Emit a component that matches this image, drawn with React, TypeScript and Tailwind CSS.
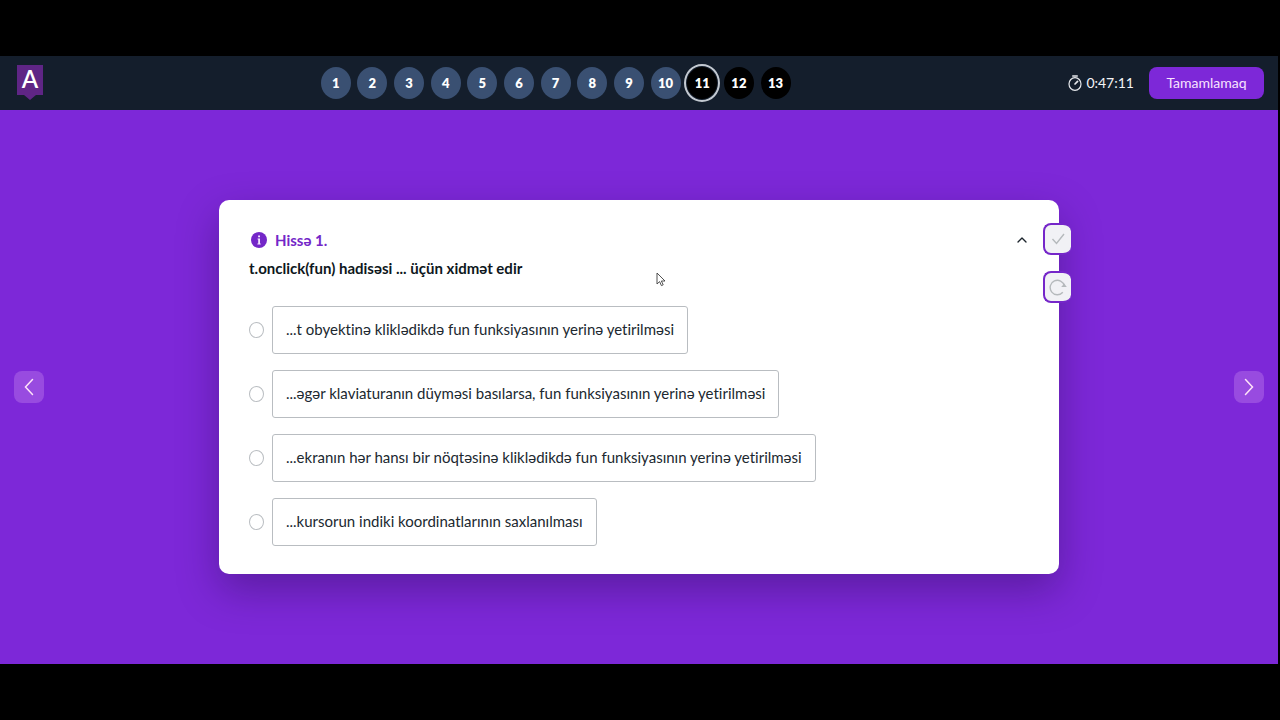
import { useState } from "react";
import { ChevronUp } from "lucide-react";
import clsx from "clsx";

const questions = Array.from({ length: 13 }, (_, i) => i + 1);
const answeredCount = 10;

const options = [
  "...t obyektinə kliklədikdə fun funksiyasının yerinə yetirilməsi",
  "...əgər klaviaturanın düyməsi basılarsa, fun funksiyasının yerinə yetirilməsi",
  "...ekranın hər hansı bir nöqtəsinə kliklədikdə fun funksiyasının yerinə yetirilməsi",
  "...kursorun indiki koordinatlarının saxlanılması",
];

function Logo() {
  return (
    <a href="#" aria-label="Ana səhifə" className="relative mb-0.5 flex h-[35px] w-[26px] justify-center">
      <svg viewBox="0 0 26 35" className="absolute inset-0 h-full w-full" aria-hidden="true">
        <path d="M0 0h26v30h-7l-6 5-6-5H0z" fill="#5f2585" />
      </svg>
      <span className="relative text-2xl leading-7 font-semibold text-white">A</span>
    </a>
  );
}

function StopwatchIcon() {
  return (
    <svg viewBox="0 0 14 16" className="h-4 w-3.5" fill="none" stroke="#e5e7eb" strokeWidth="1.2" strokeLinecap="round" aria-hidden="true">
      <path d="M4.8 1h4.4" strokeWidth="1.6" />
      <ellipse cx="7" cy="9" rx="6" ry="6.4" />
      <path d="M7 9l2.6-2.7" strokeWidth="1.7" />
    </svg>
  );
}

function Header({ current, onSelect }: { current: number; onSelect: (n: number) => void }) {
  return (
    <header className="flex h-[54px] items-center justify-between bg-[#141e2c] pr-3.5 pl-[17px]">
      <Logo />
      <nav aria-label="Suallar" className="flex w-[470px] items-center justify-between">
        {questions.map((n) => (
          <button
            key={n}
            type="button"
            onClick={() => onSelect(n)}
            className={clsx(
              "h-8 w-[30px] rounded-[50%] pt-0.5 text-[13px] font-extrabold text-white",
              n <= answeredCount ? "bg-[#3a5072]" : "bg-black",
              n === current && "outline-2 outline-offset-1 outline-[#c3c9d1]"
            )}
          >
            {n}
          </button>
        ))}
      </nav>
      <div className="flex items-center gap-[15px]">
        <div className="flex items-center gap-1 text-sm text-gray-100">
          <StopwatchIcon />
          <span>0:47:11</span>
        </div>
        <button type="button" className="h-8 w-[115px] rounded-lg bg-[#7d28d8] text-sm text-[#f8e4ff]">
          Tamamlamaq
        </button>
      </div>
    </header>
  );
}

function SideActions() {
  const style = "flex h-8 w-7 items-center justify-center rounded-lg border-t-2 border-l-2 border-b-2 border-[#7526c9] bg-[#f1f1f5]";
  return (
    <div className="absolute top-[23px] -right-3 flex flex-col gap-4">
      <button type="button" aria-label="Yoxla" className={style}>
        <svg viewBox="0 0 14 14" className="size-3.5" fill="none" stroke="#b5b9bc" strokeWidth="1.4" aria-hidden="true">
          <path d="M1.5 7l4 4.5L13 2" />
        </svg>
      </button>
      <button type="button" aria-label="Sıfırla" className={style}>
        <svg viewBox="0 0 18 18" className="size-[18px]" fill="none" stroke="#b5b9bc" strokeWidth="1.4" aria-hidden="true">
          <path d="M13.8 14.2A7.2 7.2 0 1 1 15.4 8" />
          <path d="M12.2 9h5.6L15.2 5.4z" fill="#b5b9bc" stroke="none" />
        </svg>
      </button>
    </div>
  );
}

function QuestionCard() {
  const [selected, setSelected] = useState<number | null>(null);

  return (
    <section className="relative w-full max-w-[840px] rounded-[10px] bg-white px-[30px] py-7 shadow-[0_16px_40px_rgba(30,10,60,0.35)]">
      <div className="flex h-6 items-center justify-between">
        <h2 className="flex items-center gap-2 pl-0.5 text-[15px] font-bold text-[#7427c8]">
          <svg viewBox="0 0 16 16" className="size-4" aria-hidden="true">
            <circle cx="8" cy="8" r="8" fill="#7427c8" />
            <path d="M7.1 3.4h1.9v1.8H7.1zM6.6 6.6H9v4.8h.7v1H6.4v-1h.8V7.6h-.6z" fill="#f3e6ff" />
          </svg>
          Hissə 1.
        </h2>
        <button type="button" aria-label="Bağla" className="flex w-3.5 justify-center text-[#1c242c]">
          <ChevronUp className="size-4 shrink-0" strokeWidth={2} />
        </button>
      </div>
      <p className="mt-1 text-[15px] leading-6 font-bold text-[#0e1720]">
        t.onclick(fun) hadisəsi ... üçün xidmət edir
      </p>
      <div role="radiogroup" className="mt-[26px] flex flex-col items-start gap-4">
        {options.map((text, i) => (
          <label key={text} className="flex items-center gap-2">
            <input
              type="radio"
              name="answer"
              checked={selected === i}
              onChange={() => setSelected(i)}
              className="h-4 w-[15px] shrink-0 appearance-none rounded-[50%] border border-[#b9bdc1] checked:border-[#7427c8] checked:bg-[#7427c8]"
            />
            <span className="flex min-h-12 items-center rounded-[3px] border border-[#b9bdc1] px-[13px] pb-0.5 text-[15px] text-[#20282f]">
              {text}
            </span>
          </label>
        ))}
      </div>
      <SideActions />
    </section>
  );
}

function Arrow({ path, label, onClick }: { path: string; label: string; onClick: () => void }) {
  return (
    <button
      type="button"
      aria-label={label}
      onClick={onClick}
      className="flex h-8 w-[30px] shrink-0 items-center justify-center rounded-lg bg-[#984be0] text-[#ffe3f8]"
    >
      <svg viewBox="0 0 10 18" className="h-[18px] w-2.5" fill="none" stroke="currentColor" strokeWidth="1.5" strokeLinecap="round" aria-hidden="true">
        <path d={path} />
      </svg>
    </button>
  );
}

function Pointer() {
  return (
    <svg viewBox="0 0 10 15" className="absolute top-[272px] left-[656px] h-[15px] w-2.5" aria-hidden="true">
      <path d="M1 1v11l2.6-2.4 1.8 4 1.8-.8-1.8-3.8H9z" fill="white" stroke="#3d3d3d" strokeWidth="0.9" />
    </svg>
  );
}

export default function App() {
  const [current, setCurrent] = useState(11);

  return (
    <div className="relative flex min-h-screen flex-col bg-black py-14 pr-0.5 font-['Lato','Noto_Sans',sans-serif] [font-variant-ligatures:none]">
      <Header current={current} onSelect={setCurrent} />
      <main className="flex flex-1 items-center justify-between bg-[#7d28d8] px-3.5">
        <Arrow path="M8.5 1.5L1.5 9l7 7.5" label="Əvvəlki" onClick={() => setCurrent(Math.max(1, current - 1))} />
        <QuestionCard />
        <Arrow
          path="M1.5 1.5L8.5 9l-7 7.5"
          label="Növbəti"
          onClick={() => setCurrent(Math.min(questions.length, current + 1))}
        />
      </main>
      <Pointer />
    </div>
  );
}
